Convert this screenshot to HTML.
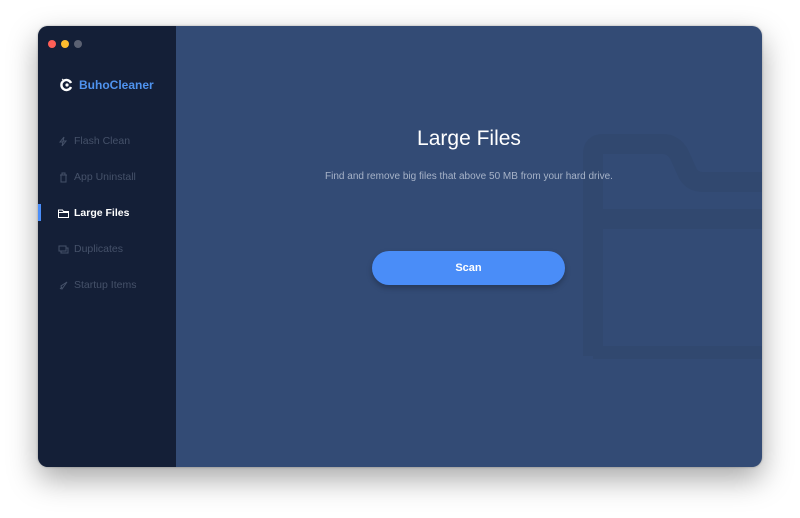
<!DOCTYPE html>
<html><head><meta charset="utf-8"><style>
*{margin:0;padding:0;box-sizing:border-box}
body{width:800px;height:518px;background:#fff;position:relative;overflow:hidden;font-family:"Liberation Sans",sans-serif}
.win{position:absolute;left:38px;top:26px;width:724px;height:441px;border-radius:10px;overflow:hidden;background:#334b75;box-shadow:0 12px 30px rgba(0,0,0,.35),0 0 2px rgba(0,0,0,.3)}
.side{position:absolute;left:0;top:0;width:138px;height:100%;background:#141f37}
.dot{position:absolute;top:14px;width:8px;height:8px;border-radius:50%}
.logo{position:absolute;left:22px;top:52px;color:#4f93ef;font-weight:bold;font-size:12px;display:flex;align-items:center;gap:5px}
.item{position:absolute;left:20px;font-size:10.5px;color:#455169;display:flex;align-items:center;gap:5px}
.item svg{width:11px;height:11px}
.act{color:#fff;font-weight:bold}
.bar{position:absolute;left:0;top:178px;width:3px;height:17px;background:#4a8df8}
.main{position:absolute;left:138px;top:0;right:0;bottom:0}
h1{position:absolute;left:0;width:586px;top:101px;text-align:center;color:#fff;font-weight:normal;font-size:21px}
.sub{position:absolute;left:0;width:586px;top:145px;text-align:center;color:#a7b3c8;font-size:10px}
.btn{position:absolute;left:196px;top:225px;width:193px;height:34px;border-radius:17px;background:#4a8df8;color:#fff;font-weight:bold;font-size:11px;text-align:center;line-height:34px;box-shadow:0 3px 6px rgba(0,0,0,.25)}
</style></head><body>
<div class="win">
 <div class="side">
  <div class="dot" style="left:10px;background:#fe5f57"></div>
  <div class="dot" style="left:23px;background:#febc2e"></div>
  <div class="dot" style="left:36px;background:#5b6172"></div>
  <div class="logo"><svg width="14" height="14" viewBox="0 0 14 14"><path d="M11 5A5 5 0 1 0 11 9" fill="none" stroke="#fff" stroke-width="2.4"/><circle cx="7" cy="7" r="1.6" fill="#fff"/><path d="M2 1L5 3" stroke="#fff" stroke-width="1"/></svg>BuhoCleaner</div>
  <div class="item" style="top:109px"><svg viewBox="0 0 11 11"><path d="M6 1L2 6h3l-1 4 4-5H5z" fill="none" stroke="#455169"/></svg>Flash Clean</div>
  <div class="item" style="top:145px"><svg viewBox="0 0 11 11"><path d="M2 3h7M3 3v7h5V3M4 3V1h3v2" fill="none" stroke="#455169"/></svg>App Uninstall</div>
  <div class="bar"></div>
  <div class="item act" style="top:181px"><svg viewBox="0 0 11 11"><path d="M.5 2h4l1 1.5h5v6h-10z M.5 4.5h10" fill="none" stroke="#fff"/></svg>Large Files</div>
  <div class="item" style="top:217px"><svg viewBox="0 0 11 11"><path d="M1 2h7v5H1z M3 7v2h7V4H8" fill="none" stroke="#455169"/></svg>Duplicates</div>
  <div class="item" style="top:253px"><svg viewBox="0 0 11 11"><path d="M2 9l2-2M4 9l5-7-6 4z" fill="none" stroke="#455169"/></svg>Startup Items</div>
 </div>
 <div class="main">
  <svg style="position:absolute;left:407px;top:108px" width="200" height="225" viewBox="0 0 200 225">
   <path d="M10 222 V20 Q10 10 20 10 H80 Q90 10 96 20 L105 40 Q110 48 120 48 H200 M10 222 H200 M20 85 H200" fill="none" stroke="#31486f" stroke-width="20"/>
  </svg>
  <h1>Large Files</h1>
  <div class="sub">Find and remove big files that above 50 MB from your hard drive.</div>
  <div class="btn">Scan</div>
 </div>
</div>
</body></html>
